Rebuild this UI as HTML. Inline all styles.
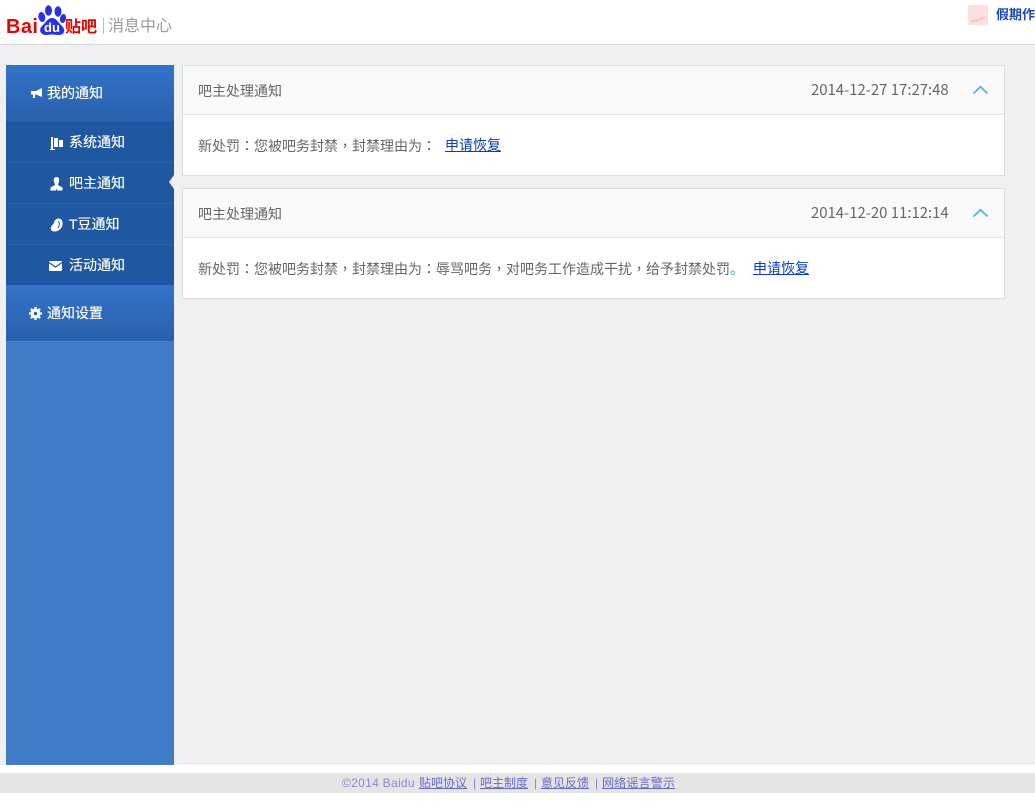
<!DOCTYPE html>
<html lang="zh"><head><meta charset="utf-8"><title>消息中心</title>
<style>
*{box-sizing:border-box}
html,body{margin:0;padding:0;width:1035px;height:803px;overflow:hidden;background:#fff}
body{position:relative;font-family:"Liberation Sans","Noto Sans CJK SC",sans-serif}
.a{position:absolute;white-space:nowrap}
#bg{left:0;top:45px;width:1035px;height:720px;background:#f0f0f0}
#hd{left:0;top:44px;width:1035px;height:1px;background:#dcdcdc}
#side{left:6px;top:65px;width:168px;height:700px;background:#3f7bc6}
.top{left:6px;width:168px;height:57px;background:linear-gradient(#3373c9,#2a60ac);color:#fff;font-size:14px;line-height:57px;padding-left:41px;text-shadow:0 0 .4px #fff}
.sub{left:6px;width:168px;height:41px;background:#1f58a0;border-bottom:1px solid #2a62ac;color:#fff;font-size:14px;line-height:40px;padding-left:63px;text-shadow:0 0 .4px #fff}
.card{left:182px;width:823px;height:111px;background:#fff;border:1px solid #ddd}
.ch{left:0;top:0;width:821px;height:49px;background:#fafafa;border-bottom:1px solid #e5e5e5}
.t{font-size:14px;color:#666;line-height:20px}
.t i{font-style:normal;font-family:"Noto Sans CJK TC",sans-serif}
.d{font-size:14.900px;color:#666;line-height:20px;font-family:"Noto Sans CJK SC",sans-serif}
a{color:#0b3fbf;text-decoration:underline}
#ft{left:0;top:773px;width:1035px;height:20px;background:#e5e5e5}
.f{top:775px;font-size:12px;line-height:17px;color:#8d87d6}
.f a{color:#6c68cc}
</style></head><body>
<div class="a" id="bg"></div><div class="a" id="hd"></div>

<div class="a" style="left:6px;top:14px;font-size:20px;font-weight:700;color:#e10602;line-height:26px;letter-spacing:.4px">Bai</div>
<svg class="a" style="left:38px;top:4px" width="28" height="32" viewBox="0 0 28 32">
<ellipse cx="3.800" cy="13" rx="3.400" ry="5" fill="#2932e1" transform="rotate(-12 3.800 13)"/>
<ellipse cx="10.500" cy="6.500" rx="3.500" ry="5.200" fill="#2932e1"/>
<ellipse cx="20" cy="7.500" rx="3.500" ry="5.200" fill="#2932e1"/>
<ellipse cx="25" cy="14.500" rx="3" ry="4.600" fill="#2932e1" transform="rotate(12 25 14.500)"/>
<path d="M14 14C10 14 8 18 5 21C0 25 2 31 8 31C11 31 12 30.500 14 30.500C16 30.500 18 31 21 31C27 31 28 25 23 21C20 18 18 14 14 14Z" fill="#2932e1"/>
<text x="14" y="28" text-anchor="middle" font-family="Liberation Sans" font-size="13" font-weight="700" fill="#fff">du</text>
</svg>
<div class="a" style="left:65px;top:18px;font-size:16px;font-weight:700;color:#e10602;line-height:20px">贴吧</div>
<div class="a" style="left:103px;top:18px;width:1px;height:16px;background:#bbb"></div>
<div class="a" style="left:108px;top:16px;font-size:16px;color:#999;line-height:22px">消息中心</div>

<div class="a" style="left:968px;top:5px;width:20px;height:20px;background:#fddfe0;border-radius:2px"></div>
<svg class="a" style="left:968px;top:5px" width="20" height="20"><path d="M3 15l2 2 2-2 2 1 3-2 2 0 3-2" stroke="#f3b3b8" fill="none"/></svg>
<div class="a" style="left:996px;top:6px;font-size:13px;font-weight:700;color:#1c48b8;line-height:18px">假期作</div>

<div class="a" id="side"></div>
<div class="a top" style="top:65px">我的通知</div>
<svg class="a" style="left:30px;top:87px" width="14" height="13" viewBox="0 0 14 13"><path d="M1 4H6L12 1V10L6 7.500H5V11H3V7.500H1Z" fill="#fff"/></svg>

<div class="a sub" style="top:122px;border-top:1px solid #1c5096;line-height:38px">系统通知</div>
<div class="a sub" style="top:163px">吧主通知</div>
<div class="a sub" style="top:204px">T豆通知</div>
<div class="a sub" style="top:245px;height:40px;line-height:41px;border-bottom:0">活动通知</div>
<svg class="a" style="left:50px;top:136px" width="14" height="15" viewBox="0 0 14 15"><path d="M1 1H3V13H5V14H0V13H1ZM4 2H8V11H4ZM9 4H13V11H9Z" fill="#fff"/></svg>
<svg class="a" style="left:50px;top:177px" width="13" height="14" viewBox="0 0 13 14"><path d="M6.500 0C9 0 9.500 2 9 4.500C8.700 6 8 7 8 8L12.500 10.500V13.500H7L6.500 11L6 13.500H.5V10.500L5 8C5 7 4.300 6 4 4.500C3.500 2 4 0 6.500 0Z" fill="#fff"/></svg>
<svg class="a" style="left:50px;top:218px" width="13" height="14" viewBox="0 0 13 14"><path d="M8.500 .5C11.500 .5 13 3 12.500 6.500C12 10.500 8.500 13.500 4.500 13.500C1.500 13.500 0 11.500 1 9C2 7 3.500 6.500 4 4.500C4.500 2 6.500 .5 8.500 .5Z" fill="#fff"/><path d="M8.500 3C9.800 5 9.500 8 8 10" stroke="#1f58a0" fill="none"/></svg>
<svg class="a" style="left:49px;top:261px" width="13" height="10" viewBox="0 0 13 10"><rect width="13" height="10" rx="1" fill="#fff"/><path d="M0 1.500L6.500 6L13 1.500" stroke="#1f58a0" fill="none" stroke-width="1.200"/></svg>
<svg class="a" style="left:169px;top:175px" width="5" height="14"><path d="M5 0V14L0 7Z" fill="#f0f0f0"/></svg>

<div class="a top" style="top:285px;height:57px;line-height:56px;border-bottom:1px solid #4a82ca">通知设置</div>
<svg class="a" style="left:29px;top:307px" width="13" height="13" viewBox="0 0 13 13"><circle cx="6.500" cy="6.500" r="3.500" fill="none" stroke="#fff" stroke-width="3"/><path d="M6.500 0V13M0 6.500H13M1.900 1.900L11.100 11.100M11.100 1.900L1.900 11.100" stroke="#fff" stroke-width="2.200"/><circle cx="6.500" cy="6.500" r="1.800" fill="#2b66b4"/></svg>

<div class="a card" style="top:65px">
<div class="a ch"></div>
<div class="a t" style="left:15px;top:15px">吧主处理通知</div>
<div class="a d" style="left:628px;top:14px">2014-12-27 17:27:48</div>
<svg class="a" style="left:789px;top:19px" width="17" height="10"><path d="M1.500 8.500L8.500 1.800L15.500 8.500" stroke="#5cb0f0" stroke-width="1.800" fill="none"/></svg>
<div class="a t" style="left:15px;top:70px">新处罚<i lang="zh-TW">：</i>您被吧务封禁<i lang="zh-TW">，</i>封禁理由为<i lang="zh-TW">：</i></div>
<div class="a t" style="left:262px;top:69px"><a>申请恢复</a></div>
</div>

<div class="a card" style="top:188px">
<div class="a ch"></div>
<div class="a t" style="left:15px;top:15px">吧主处理通知</div>
<div class="a d" style="left:628px;top:14px">2014-12-20 11:12:14</div>
<svg class="a" style="left:789px;top:19px" width="17" height="10"><path d="M1.500 8.500L8.500 1.800L15.500 8.500" stroke="#5cb0f0" stroke-width="1.800" fill="none"/></svg>
<div class="a t" style="left:15px;top:70px">新处罚<i lang="zh-TW">：</i>您被吧务封禁<i lang="zh-TW">，</i>封禁理由为<i lang="zh-TW">：</i>辱骂吧务<i lang="zh-TW">，</i>对吧务工作造成干扰<i lang="zh-TW">，</i>给予封禁处罚<span style="color:#3f8fd8">。</span></div>
<div class="a t" style="left:570px;top:69px"><a>申请恢复</a></div>
</div>

<div class="a" id="ft"></div>
<div class="a f" style="left:342px;letter-spacing:.3px">©2014 Baidu</div>
<div class="a f" style="left:419px"><a>贴吧协议</a></div>
<div class="a f" style="left:473px">|</div>
<div class="a f" style="left:480px"><a>吧主制度</a></div>
<div class="a f" style="left:534px">|</div>
<div class="a f" style="left:541px"><a>意见反馈</a></div>
<div class="a f" style="left:595px">|</div>
<div class="a f" style="left:602px;font-size:12.200px"><a>网络谣言警示</a></div>
</body></html>
